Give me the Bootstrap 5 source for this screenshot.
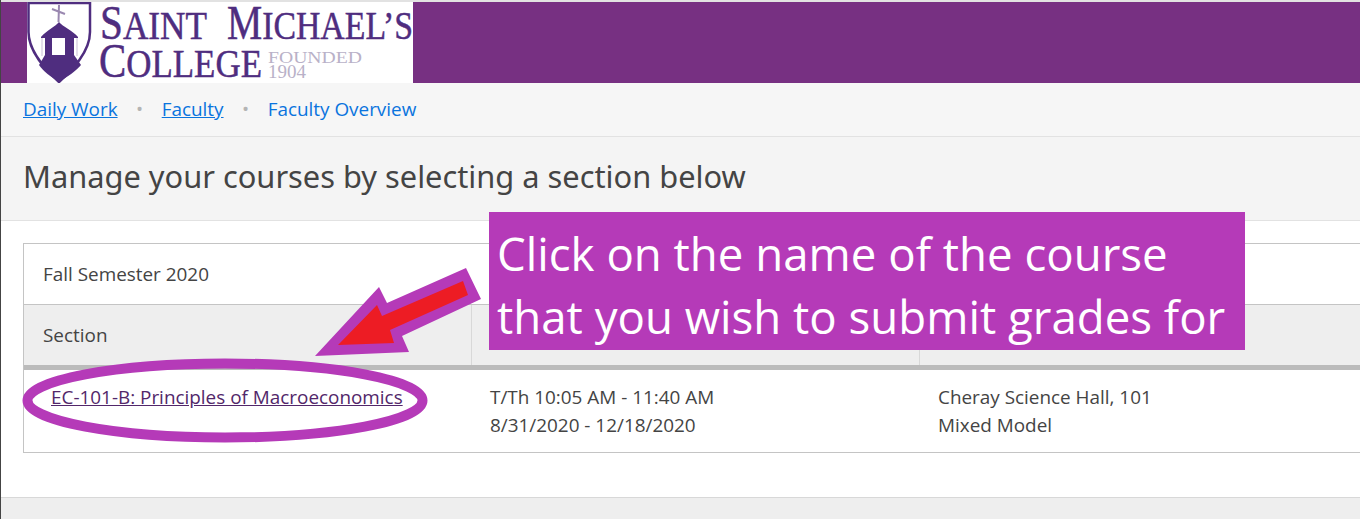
<!DOCTYPE html>
<html lang="en">

<head>
    <meta charset="UTF-8">
    <meta name="viewport" content="width=device-width, initial-scale=1.0">
    <title>Manage your courses</title>
    <link href="https://cdn.jsdelivr.net/npm/bootstrap@5.3.0/dist/css/bootstrap.min.css" rel="stylesheet">
    <style>
        body {
            font-family: "Open Sans", "Noto Sans", sans-serif;
            font-size: 18.9px;
            color: #444;
            background: #fff;
            border-left: 1px solid #444;
            height: 519px;
            overflow: hidden;
            position: relative;
        }

        .top-band {
            height: 83px;
            border-top: 2px solid #e2e2e2;
            background: #773082;
            padding-left: 26px;
        }

        .logo-box {
            display: block;
            width: 386px;
            height: 81px;
            background: #fff;
        }

        .crumb-bar {
            height: 54px;
            background: #f6f6f6;
            border-bottom: 1px solid #e2e2e2;
            padding-left: 22px;
        }

        .crumb-bar .breadcrumb {
            --bs-breadcrumb-divider: '•';
            --bs-breadcrumb-item-padding-x: 18.5px;
            --bs-breadcrumb-divider-color: #b4b4b4;
            --bs-breadcrumb-margin-bottom: 0;
            line-height: 53px;
        }

        .crumb-bar a {
            color: #0a74de;
        }

        .crumb-bar .active {
            color: #0a74de;
        }

        .page-head {
            height: 84px;
            background: #f4f4f4;
            border-bottom: 1px solid #e2e2e2;
            padding-left: 22px;
        }

        .page-head h1 {
            font-family: "Noto Sans", sans-serif;
            font-size: 30.8px;
            font-weight: 400;
            line-height: 79px;
            color: #444;
            margin: 0;
        }

        .content-area {
            height: 276px;
            padding: 22px 0 0 22px;
            overflow: hidden;
        }

        .term-panel {
            width: 1400px;
            border: 1px solid #c4c4c4;
        }

        .term-title {
            height: 61px;
            line-height: 60px;
            padding-left: 19px;
            border-bottom: 1px solid #c4c4c4;
        }

        .term-table {
            table-layout: fixed;
            margin: 0;
            color: #444;
        }

        .term-table th,
        .term-table td {
            border: 0;
            color: #444;
            box-shadow: none;
        }

        .term-table th {
            height: 62px;
            background: #eee;
            font-weight: 400;
            padding: 0 19px;
            vertical-align: middle;
            border-bottom: 5px solid #bbb;
            border-right: 1px solid #d8d8d8;
        }

        .term-table th:last-child {
            border-right: 0;
        }

        .term-table td {
            height: 85px;
            padding: 13px 19px 0;
            line-height: 28px;
            vertical-align: top;
        }

        .term-table td:first-child {
            padding-left: 27px;
        }

        .term-table a {
            color: #52276a;
        }

        .page-foot {
            height: 22px;
            background: #eee;
            border-top: 1px solid #d8d8d8;
        }

        .callout-note {
            position: absolute;
            left: 488px;
            top: 212px;
            width: 756px;
            height: 138px;
            padding: 10px 0 0 8px;
            background: #b53ab8;
            color: #fff;
            font-family: "Open Sans", sans-serif;
            font-size: 45.6px;
            line-height: 63px;
            white-space: nowrap;
        }

        .mark-up {
            position: absolute;
            left: -1px;
            top: 0;
            pointer-events: none;
        }

        .edge-tick {
            position: absolute;
            left: -1px;
            top: 452px;
            width: 1px;
            height: 5px;
            background: #8a2f9c;
        }
    </style>
</head>

<body>
    <div class="top-band">
        <svg class="logo-box" viewBox="0 0 386 81" aria-label="Saint Michael's College">
            <path d="M1.5 1H63V30C63 50 45 68 32 80C19 68 1.5 50 1.5 30Z" fill="#fff" stroke="#4f2d7f" stroke-width="2.5" />
            <path d="M32 3L31.5 20M25 7L38 12" stroke="#9a88b0" stroke-width="2" fill="none" />
            <path d="M32 20C36 25 45 28 51 35V36H14V35C20 28 28 25 32 20Z" fill="#4f2d7f" />
            <path d="M18 36H25V53H18ZM38 36H47V53H38Z" fill="#4f2d7f" />
            <path d="M15 36V54M50 36V54" stroke="#c9bfd6" stroke-width="1" />
            <path d="M18 53H47L54 63C49 69 40 75 32 80C24 75 16 69 12 63Z" fill="#4f2d7f" />
            <g font-family="'Liberation Serif', serif" fill="#4f2d7f" stroke="#4f2d7f" stroke-width=".5">
                <text x="73" y="37" font-size="48" textLength="107" lengthAdjust="spacingAndGlyphs">S<tspan font-size="41">AINT</tspan></text>
                <text x="200" y="37" font-size="48" textLength="186" lengthAdjust="spacingAndGlyphs">M<tspan font-size="41">ICHAEL’S</tspan></text>
                <text x="72" y="75" font-size="48" textLength="163" lengthAdjust="spacingAndGlyphs">C<tspan font-size="41">OLLEGE</tspan></text>
            </g>
            <g font-family="'Liberation Serif', serif" fill="#b9b1c8">
                <text x="241" y="61" font-size="16.5" textLength="94" lengthAdjust="spacingAndGlyphs">FOUNDED</text>
                <text x="241" y="76" font-size="19" textLength="38" lengthAdjust="spacingAndGlyphs">1904</text>
            </g>
        </svg>
    </div>

    <div class="crumb-bar">
        <nav aria-label="breadcrumb">
            <ol class="breadcrumb">
                <li class="breadcrumb-item"><a href="#">Daily Work</a></li>
                <li class="breadcrumb-item"><a href="#">Faculty</a></li>
                <li class="breadcrumb-item active" aria-current="page">Faculty Overview</li>
            </ol>
        </nav>
    </div>

    <div class="page-head">
        <h1>Manage your courses by selecting a section below</h1>
    </div>

    <div class="content-area">
        <div class="term-panel">
            <div class="term-title">Fall Semester 2020</div>
            <table class="table term-table">
                <colgroup>
                    <col style="width: 447px">
                    <col style="width: 448px">
                    <col>
                </colgroup>
                <thead>
                    <tr>
                        <th>Section</th>
                        <th></th>
                        <th></th>
                    </tr>
                </thead>
                <tbody>
                    <tr>
                        <td><a href="#">EC-101-B: Principles of Macroeconomics</a></td>
                        <td>T/Th 10:05 AM - 11:40 AM<br>8/31/2020 - 12/18/2020</td>
                        <td>Cheray Science Hall, 101<br>Mixed Model</td>
                    </tr>
                </tbody>
            </table>
        </div>
    </div>

    <div class="page-foot"></div>

    <svg class="mark-up" width="1360" height="519" viewBox="0 0 1360 519">
        <ellipse cx="225" cy="400.5" rx="197.5" ry="37" fill="none" stroke="#b53ab8" stroke-width="10" />
        <polygon points="315,356 379,287 387,303 466,268 481,299 402,336 409,352" fill="#b53ab8" />
        <polygon points="338,345 377,305 382,316 463,281 468,295 390,330 394,343" fill="#ed1c24" />
    </svg>

    <div class="callout-note">Click on the name of the course<br>that you wish to submit grades for</div>
    <div class="edge-tick"></div>

    <script src="https://cdn.jsdelivr.net/npm/bootstrap@5.3.0/dist/js/bootstrap.bundle.min.js"></script>
</body>

</html>
